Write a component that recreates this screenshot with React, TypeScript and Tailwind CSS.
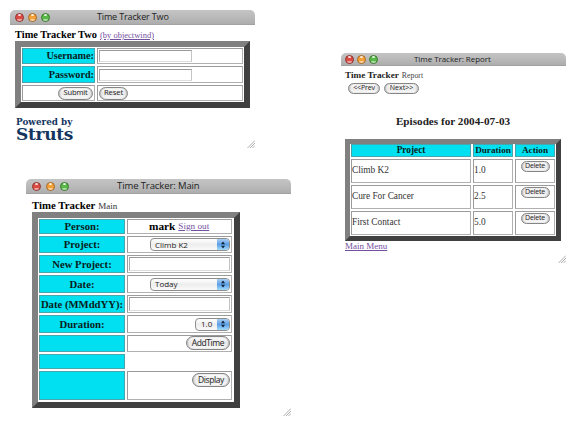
import React from "react";

type Kids = { children?: React.ReactNode; className?: string };

const serif = "font-['Liberation_Serif','Times_New_Roman',serif]";
const sans = "font-['Open_Sans','Noto_Sans',sans-serif]";

function Light({ className }: { className: string }) {
  return (
    <span
      className={`relative block h-[9px] w-[9px] overflow-hidden rounded-full border ${className}`}
    >
      <span className="absolute left-[2px] top-0 h-[2px] w-[3px] rounded-full bg-white/80" />
      <span className="absolute bottom-0 left-[1px] h-[2px] w-[5px] rounded-full bg-white/50" />
    </span>
  );
}

function TitleBar({ title, bar, lights, text }: { title: string; bar: string; lights: string; text: string }) {
  return (
    <div
      className={`flex items-center rounded-t-[5px] border-b border-[#a2a2a2] bg-linear-to-b from-[#c4c4c4] via-[#bababa] to-[#adadad] ${bar}`}
    >
      <div className={`flex ${lights}`}>
        <Light className="border-[#8c3a36] bg-[#dc4a42]" />
        <Light className="border-[#a5672a] bg-[#f3a136]" />
        <Light className="border-[#3f7a35] bg-[#58b947]" />
      </div>
      <div className={`whitespace-nowrap text-[#222] ${sans} ${text}`}>{title}</div>
    </div>
  );
}

function Grip({ className }: { className: string }) {
  return (
    <svg viewBox="0 0 8 8" className={`absolute h-[8px] w-[8px] ${className}`} stroke="#9a9a9a" strokeWidth="0.8">
      <path d="M0.5 8 8 0.5M3 8 8 3M5.5 8 8 5.5" />
    </svg>
  );
}

const frame = "border-t-[#808080] border-l-[#808080] border-b-[#404040] border-r-[#404040] bg-white";

function Cell({ children, className = "" }: Kids) {
  return (
    <div
      className={`flex min-w-0 overflow-hidden whitespace-nowrap border border-t-[#9b9b9b] border-l-[#9b9b9b] border-b-[#b0b0b0] border-r-[#b0b0b0] ${className}`}
    >
      {children}
    </div>
  );
}

function Head({ children, className = "" }: Kids) {
  return (
    <div
      className={`flex min-w-0 items-center overflow-hidden whitespace-nowrap border border-t-[#4ba5ac] border-l-[#4b9da5] border-b-[#4ba5ac] border-r-[#4ba5ac] bg-[#00e0f0] font-bold text-[#0a1c20] ${className}`}
    >
      {children}
    </div>
  );
}

function Button({ children, className = "" }: Kids) {
  return (
    <button
      className={`flex shrink-0 items-center justify-center whitespace-nowrap rounded-full border border-[#858585] bg-linear-to-b from-[#fdfdfd] via-[#e9e9e9] to-[#fafafa] text-[#222] shadow-[inset_1px_0_1px_#bbb,inset_-1px_0_1px_#bbb] ${sans} ${className}`}
    >
      {children}
    </button>
  );
}

function Field({ className = "" }: { className?: string }) {
  return (
    <div className={`border border-t-[#999] border-l-[#aaa] border-b-[#ddd] border-r-[#c4c4c4] bg-white ${className}`} />
  );
}

function Popup({ children, className = "" }: Kids) {
  return (
    <div
      className={`flex h-[13px] items-center justify-between overflow-hidden rounded-[4px] border border-[#8d8d8d] bg-linear-to-b from-white via-[#ededed] to-[#fafafa] text-[#222] ${sans} ${className}`}
    >
      <span>{children}</span>
      <span className="flex h-full w-[12px] items-center justify-center bg-linear-to-b from-[#a9cdf3] via-[#5c9fe5] to-[#a5dcfa]">
        <svg viewBox="0 0 6 8" className="h-[8px] w-[6px]" fill="#10233d">
          <path d="M3 0.5 5 3.3H1ZM3 7.5 5 4.7H1Z" />
        </svg>
      </span>
    </div>
  );
}

function LoginWindow() {
  return (
    <section className="absolute left-[10px] top-[10px] h-[138px] w-[245px]">
      <TitleBar title="Time Tracker Two" bar="h-[15px] pl-[5px]" lights="gap-[4px]" text="ml-[47px] text-[9px] tracking-[-0.15px]" />
      <div className="pl-[5px]">
        <h1 className="flex h-[16px] items-baseline gap-[3px] whitespace-nowrap pt-[4px] text-[10.4px] font-bold leading-[12px]">
          Time Tracker Two <a className="text-[8.5px] font-normal text-[#7350a0] underline">(by objectwind)</a>
        </h1>
        <div className={`grid h-[67px] w-[235px] grid-cols-[73px_146px] grid-rows-[16px_17px_16px] gap-[2px] border-[6px] pl-[1px] pt-[1px] ${frame}`}>
          <Head className="justify-end text-[10.2px]">Username:</Head>
          <Cell className="items-center pl-[1px]"><Field className="h-[12px] w-[93px]" /></Cell>
          <Head className="justify-end text-[10.2px]">Password:</Head>
          <Cell className="items-center pl-[1px]"><Field className="h-[12px] w-[93px]" /></Cell>
          <Cell className="items-center justify-end pr-[1px]"><Button className="h-[13px] w-[35px] text-[7.6px] tracking-[-0.2px]">Submit</Button></Cell>
          <Cell className="items-center pl-[1px]"><Button className="h-[13px] w-[29px] text-[7.6px] tracking-[-0.1px]">Reset</Button></Cell>
        </div>
        <div className="flex flex-col items-start whitespace-nowrap pl-[1px] pt-[9px] font-bold text-[#14355e]">
          <span className="font-['DejaVu_Serif',serif] text-[8.8px] leading-[10px] tracking-[0.02px]">Powered by</span>
          <span className="font-['DejaVu_Serif',serif] text-[17px] leading-[14px] tracking-[-0.3px]">Struts</span>
        </div>
      </div>
      <Grip className="right-0 bottom-0" />
    </section>
  );
}

function MainWindow() {
  return (
    <section className="absolute left-[26px] top-[179px] h-[237px] w-[265px]">
      <TitleBar title="Time Tracker: Main" bar="h-[15px] pl-[6px]" lights="gap-[5px]" text="ml-[48px] text-[9.5px] tracking-[-0.1px]" />
      <div className="pl-[6px]">
        <h1 className="flex h-[18px] items-baseline gap-[3px] whitespace-nowrap pt-[5px] text-[10.8px] font-bold leading-[13px]">
          Time Tracker <span className="text-[9px] font-normal text-[#333]">Main</span>
        </h1>
        <div className={`grid h-[196px] w-[208px] grid-cols-[86px_105px] grid-rows-[15px_17px_18px_18px_18px_18px_17px_15px_29px] gap-[2px] border-[6px] pl-[1px] pt-[1px] text-[10.7px] ${frame}`}>
          <Head className="justify-center">Person:</Head>
          <Cell className="items-center justify-start gap-[3px] pl-[21px] text-[11.3px] font-bold">mark <a className="text-[9.2px] font-normal text-[#7350a0] underline">Sign out</a></Cell>
          <Head className="justify-center">Project:</Head>
          <Cell className="items-center justify-end pr-[1px]"><Popup className="w-[80px] pl-[4px] text-[8px]">Climb K2</Popup></Cell>
          <Head className="justify-center">New Project:</Head>
          <Cell className="items-center justify-center"><Field className="h-[14px] w-[101px]" /></Cell>
          <Head className="justify-center">Date:</Head>
          <Cell className="items-center justify-end pr-[1px]"><Popup className="w-[80px] pl-[4px] text-[8px]">Today</Popup></Cell>
          <Head className="justify-center">Date (MMddYY):</Head>
          <Cell className="items-center justify-center"><Field className="h-[14px] w-[101px]" /></Cell>
          <Head className="justify-center">Duration:</Head>
          <Cell className="items-center justify-end pr-[1px]"><Popup className="w-[35px] pl-[5px] text-[8px]">1.0</Popup></Cell>
          <Head />
          <Cell className="items-start justify-end pr-[1px]"><Button className="h-[14px] w-[44px] text-[8.5px] tracking-[-0.4px]">AddTime</Button></Cell>
          <Head />
          <div />
          <Head />
          <Cell className="items-start justify-end pr-[1px] pt-[1px]"><Button className="h-[14px] w-[38px] text-[8.5px] tracking-[-0.4px]">Display</Button></Cell>
        </div>
      </div>
      <Grip className="right-0 bottom-0" />
    </section>
  );
}

const episodes = [
  { project: "Climb K2", duration: "1.0" },
  { project: "Cure For Cancer", duration: "2.5" },
  { project: "First Contact", duration: "5.0" },
];

function ReportWindow() {
  return (
    <section className="absolute left-[341px] top-[53px] h-[210px] w-[225px]">
      <TitleBar title="Time Tracker: Report" bar="h-[13px] pl-[4px]" lights="gap-[3px]" text="ml-[36px] text-[8px] tracking-[-0.05px]" />
      <div className="pl-[4px]">
        <h1 className="flex h-[16px] items-baseline gap-[3px] whitespace-nowrap pt-[3px] text-[9.2px] font-bold leading-[12px] text-[#222]">
          Time Tracker <span className="text-[7.8px] font-normal text-[#444]">Report</span>
        </h1>
        <div className="flex gap-[4px] pl-[3px] pt-[1px]">
          <Button className="h-[11px] w-[32px] text-[7px] tracking-[-0.15px]">&lt;&lt;Prev</Button>
          <Button className="h-[11px] w-[35px] text-[7px]">Next&gt;&gt;</Button>
        </div>
        <h2 className="flex h-[45px] w-[216px] items-center justify-center whitespace-nowrap pt-[10px] text-[11.2px] font-bold text-[#222]">Episodes for 2004-07-03</h2>
        <div className={`grid h-[102px] w-[216px] grid-cols-[120px_40px_40px] grid-rows-[13px_24px_24px_24px] gap-[2px] border-[5px] pl-[1px] ${frame}`}>
          <Head className="justify-center text-[9.3px]">Project</Head>
          <Head className="justify-center text-[9.2px]">Duration</Head>
          <Head className="justify-center text-[9.2px]">Action</Head>
          {episodes.map((e) => (
            <React.Fragment key={e.project}>
              <Cell className="items-center text-[9.3px] text-[#333]">{e.project}</Cell>
              <Cell className="items-center text-[9.3px] text-[#333]">{e.duration}</Cell>
              <Cell className="items-start justify-center pt-[1px]"><Button className="h-[11px] w-[29px] text-[7px] tracking-[-0.2px]">Delete</Button></Cell>
            </React.Fragment>
          ))}
        </div>
        <a className="block h-[11px] whitespace-nowrap text-[9px] leading-[11px] text-[#7350a0] underline">Main Menu</a>
      </div>
      <Grip className="right-0 bottom-0" />
    </section>
  );
}

export default function App() {
  return (
    <main className={`relative h-[427px] w-[575px] overflow-hidden bg-white text-black ${serif}`}>
      <LoginWindow />
      <MainWindow />
      <ReportWindow />
    </main>
  );
}
